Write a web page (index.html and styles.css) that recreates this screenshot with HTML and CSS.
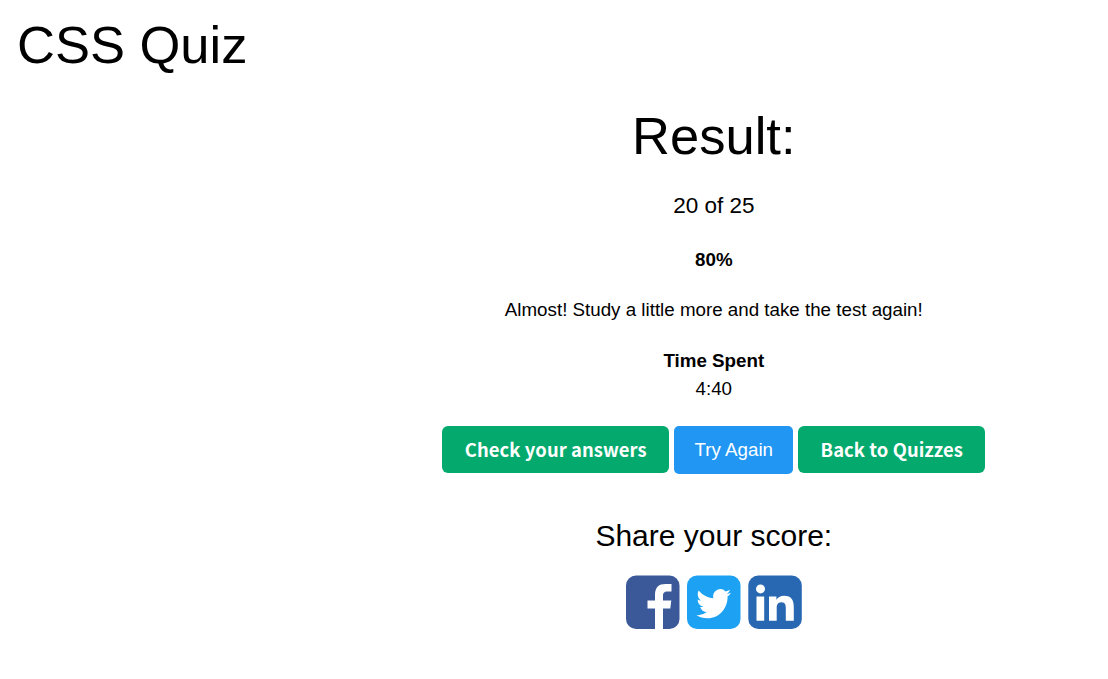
FILE: index.html
```html
<!DOCTYPE html>
<html lang="en">
<head>
<meta charset="utf-8">
<title>CSS Quiz</title>
<link rel="stylesheet" href="styles.css">
</head>
<body>
<h1 class="title">CSS Quiz</h1>
<main class="result">
<h2 class="heading">Result:</h2>
<p class="score">20 of 25</p>
<p class="percent">80%</p>
<p class="message">Almost! Study a little more and take the test again!</p>
<p class="time"><b>Time Spent</b><br>4:40</p>
<div class="actions">
<a class="btn check">Check your answers</a>
<a class="btn retry">Try Again</a>
<a class="btn back">Back to Quizzes</a>
</div>
<h3 class="share">Share your score:</h3>
<div class="social">
<svg viewBox="0 0 54 54"><rect width="53.500" height="53.500" y=".5" rx="10" fill="#3b5998"/><path fill="#fff" d="M29 54V33.500h-7.500v-8H29v-5.500c0-8 4-11 10.500-11h6v7.500h-4c-3.500 0-4.500 1.700-4.500 4.300v4.700h8.300l-1 8H37V54z"/></svg>
<svg viewBox="0 0 54 54"><rect width="53.500" height="53.500" y=".5" rx="10" fill="#1da1f2"/><path fill="#fff" transform="translate(9.300 10.900) scale(1.450 1.490)" d="M23.950 4.570a10 10 0 0 1-2.820.77 4.960 4.960 0 0 0 2.160-2.720c-.95.550-2 .950-3.120 1.180a4.920 4.920 0 0 0-8.380 4.480C7.690 8.090 4.070 6.130 1.640 3.160a4.820 4.820 0 0 0-.66 2.470c0 1.710.87 3.210 2.190 4.100a4.900 4.900 0 0 1-2.230-.620v.06a4.920 4.920 0 0 0 3.950 4.830 5 5 0 0 1-2.210.08 4.940 4.940 0 0 0 4.600 3.420A9.870 9.870 0 0 1 0 19.540a14 14 0 0 0 7.550 2.210c9.050 0 14-7.500 14-13.980 0-.21 0-.42-.02-.63a9.940 9.940 0 0 0 2.460-2.550z"/></svg>
<svg viewBox="0 0 54 54"><rect width="53.500" height="53.500" x=".3" y=".5" rx="10" fill="#2867b2"/><path fill="#fff" d="M8.500 21.500h7.700v24.300H8.500zM21 21.500h7.400v3.300c1.200-2.200 4-4 7.700-4 7.500 0 9.700 4.600 9.700 11.500v13.500h-8V33.700c0-3-.2-6.400-4.400-6.400S28.700 30.600 28.700 33.500v12.300H21z"/><circle cx="12.500" cy="13.900" r="4.500" fill="#fff"/></svg>
</div>
</main>
</body>
</html>
```
FILE: styles.css
```css
body { margin: 0; background: #fff; color: #000; font-family: "Liberation Sans", Arial, sans-serif; font-size: 18.75px; line-height: 28px; }
h1, h2, h3, p { margin: 0; font-weight: 400; }
.title { padding: 5px 0 0 17px; font-size: 52.5px; line-height: 79px; }
.result { width: 789.6px; margin-left: 319px; text-align: center; }
.heading { padding-top: 12px; font-size: 52.5px; line-height: 79px; }
.score { margin-top: 14px; font-size: 22.5px; line-height: 34px; }
.percent { margin-top: 23px; font-weight: 700; }
.message { margin-top: 22px; }
.time { margin-top: 23px; }
.actions { display: flex; justify-content: center; align-items: flex-start; gap: 5px; margin-top: 23px; }
.btn { box-sizing: border-box; height: 47px; border-radius: 6px; background: #04aa6d; color: #fff; font: 700 18.4px/47px "Noto Sans CJK SC", "Noto Sans", sans-serif; letter-spacing: 0.08px; white-space: nowrap; }
.check { width: 227px; }
.back { width: 187px; }
.retry { width: 119px; height: 48px; border-radius: 5px; background: #2196f3; font: 400 18.75px/48px "Liberation Sans", Arial, sans-serif; letter-spacing: 0; }
.share { margin-top: 39px; font-size: 30px; line-height: 45px; }
.social { display: flex; justify-content: center; gap: 7px; margin-top: 17px; }
.social svg { width: 54px; height: 54px; }
```
